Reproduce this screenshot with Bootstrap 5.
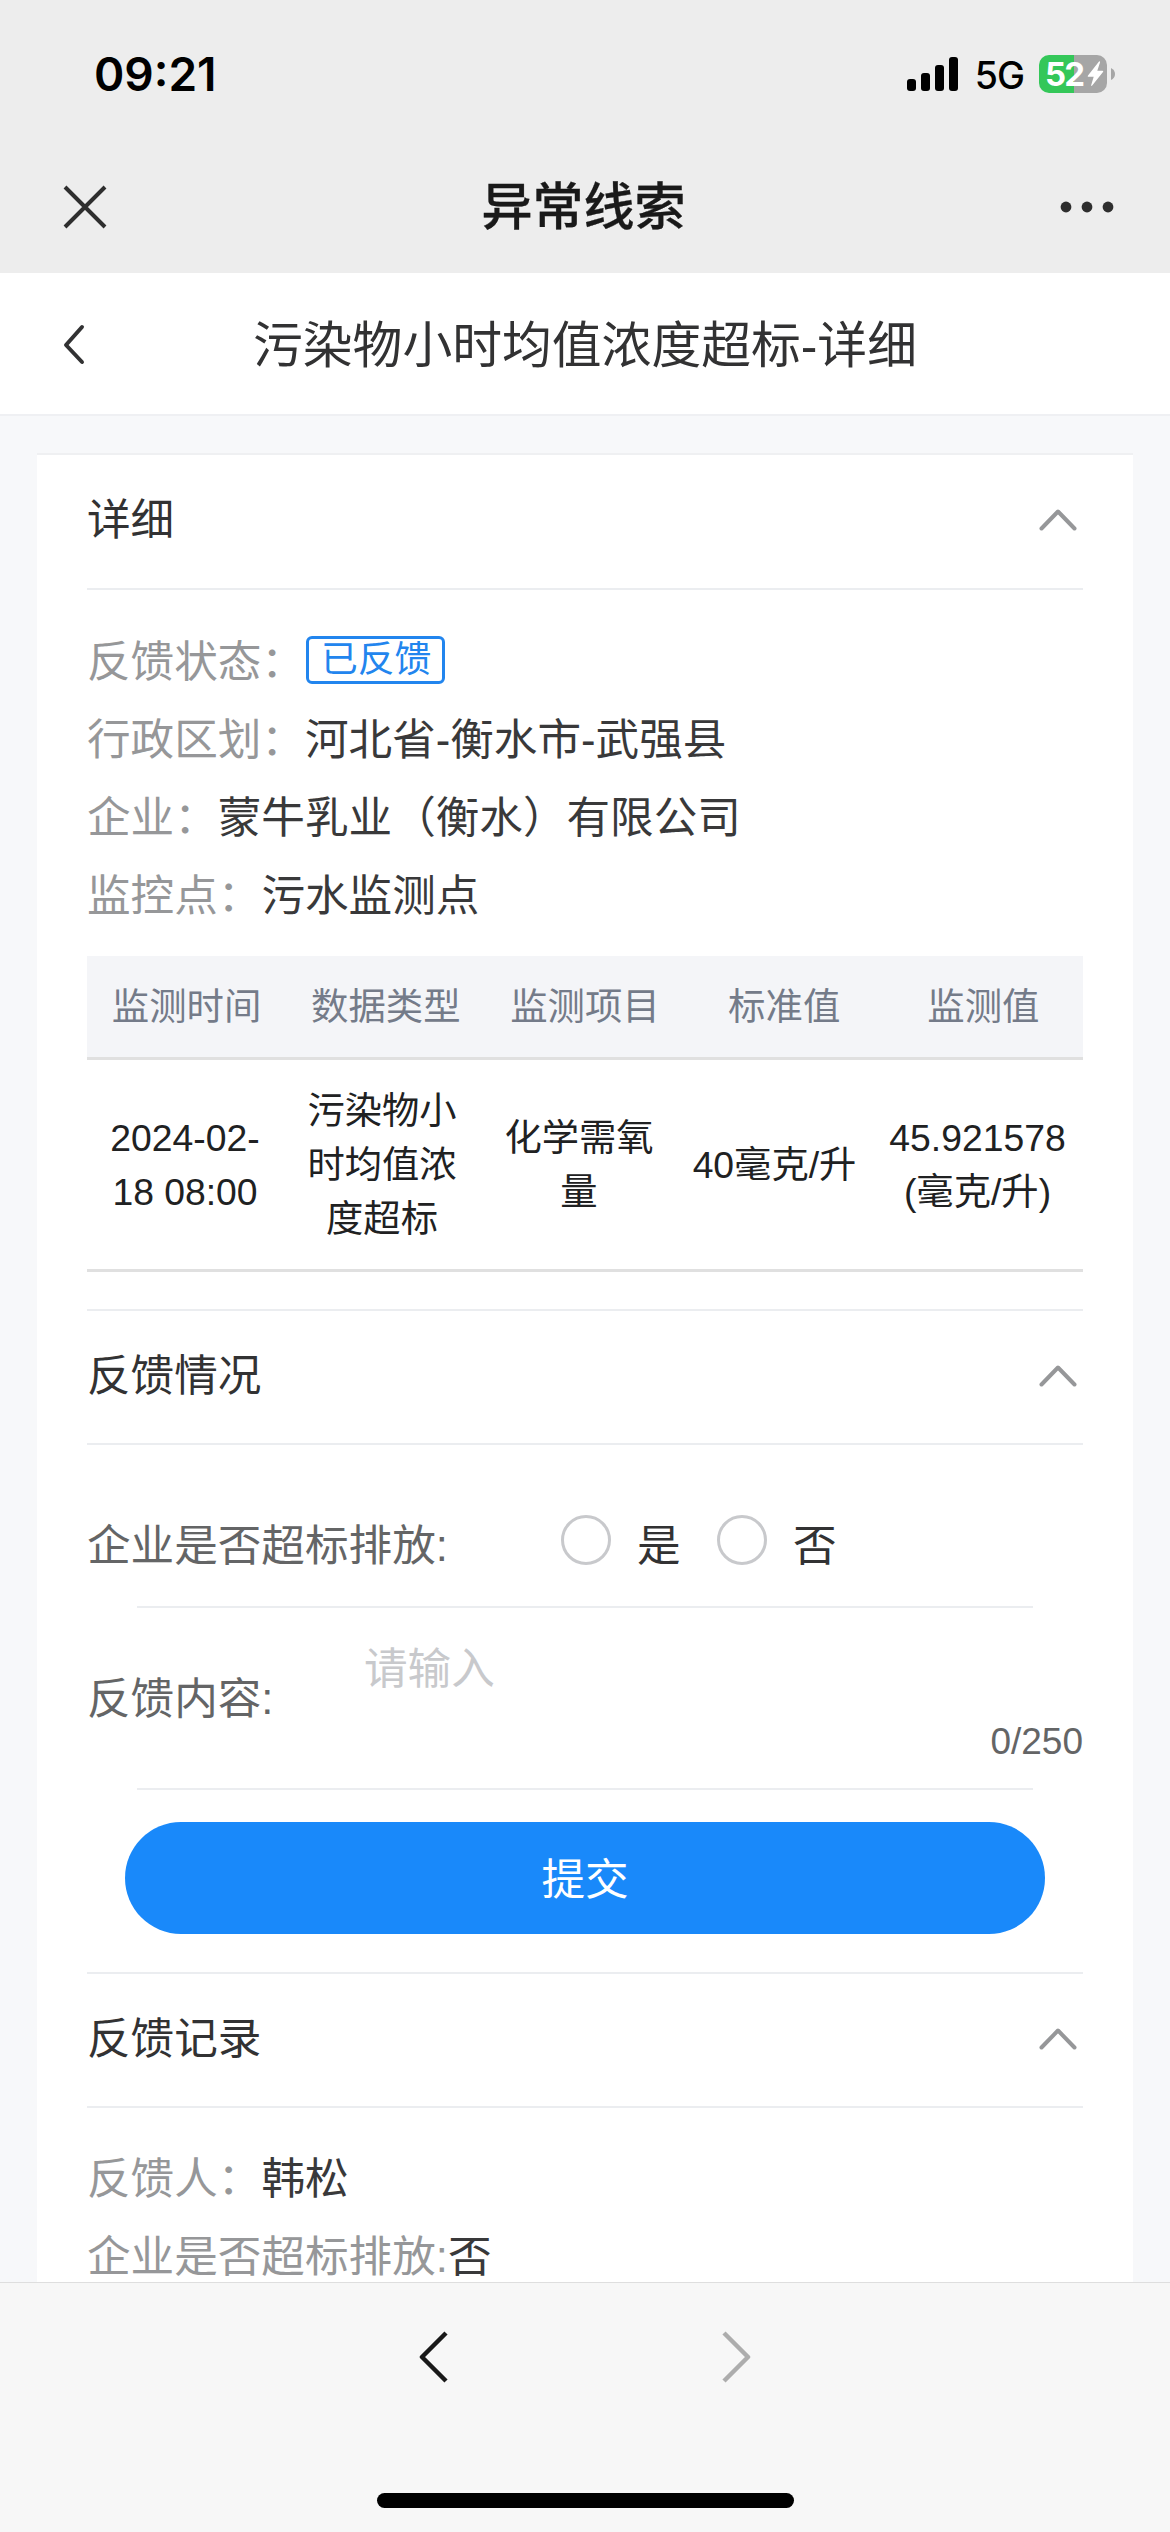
<!DOCTYPE html>
<html lang="zh-CN">
<head>
<meta charset="utf-8">
<meta name="viewport" content="width=device-width, initial-scale=1">
<title>异常线索</title>
<link href="https://cdn.jsdelivr.net/npm/bootstrap@5.3.0/dist/css/bootstrap.min.css" rel="stylesheet">
<style>
  body { font-family: "Liberation Sans", "Noto Sans CJK SC", sans-serif; font-size: 43.6px; line-height: 78px; color: #323233; background: #f7f8fa; height: 2532px; overflow: hidden; }
  svg { display: block; flex: none; }
  .chrome { background: #ededed; height: 273px; }
  .status { height: 148px; padding: 0 54px 0 94px; font-family: Inter, sans-serif; color: #000; }
  .clock { font-size: 46px; font-weight: 600; }
  .network { font-size: 37.5px; font-weight: 500; margin: 4px 15px 0 17px; letter-spacing: -1px; }
  .battery { width: 68px; height: 38px; border-radius: 10px; background: linear-gradient(90deg, #34c759 35px, #a6a6a6 35px); color: #fff; font-size: 33px; font-weight: 700; line-height: 38px; padding-left: 6px; letter-spacing: -1.8px; }
  .app-title { height: 117px; padding: 0 56px 0 63px; font-size: 51px; font-weight: 500; color: #191919; }
  .app-title span { padding-top: 2px; -webkit-text-stroke: .3px #191919; }
  .page-title { height: 143px; padding: 0 63px; font-size: 49.8px; border-bottom: 2px solid #eff0f3; }
  .page-title span { padding-top: 5px; }
  .page-title .side { width: 22px; }
  .sheet { margin: 37px 37px 0; height: 1829px; padding: 0 50px; border-top: 2px solid #eff0f2; overflow: hidden; }
  .section-head { height: 135px; padding: 0 6px 3px 0; border-bottom: 2px solid #ebedf0; }
  .divided .section-head { height: 134px; }
  .divided { border-top: 2px solid #ebedf0; }
  .gap-above { margin-top: 37px; }
  .details { padding-top: 33px; color: #39393a; }
  .divided .details { padding-top: 32px; }
  .last-line { line-height: 48px; margin-top: 15px; }
  .caption { color: #969799; }
  .state { height: 48px; border: 3px solid #2285ee; border-radius: 6px; color: #2285ee; font-size: 36.8px; line-height: 42px; padding: 0 11px 0 12px; margin: 0 0 4px 1px; }
  .grid-head { margin-top: 21px; height: 104px; background: #f4f5f8; color: #747b89; border-bottom: 3px solid #e0e0e0; font-size: 37.4px; }
  .grid-body { height: 212px; border-bottom: 3px solid #e0e0e0; font-size: 37.3px; line-height: 54px; color: #202122; }
  .w-a { width: 196px; } .w-b { width: 198px; } .w-c { width: 196px; } .w-d { width: 195px; } .w-e { width: 211px; }
  .inset { height: 2px; margin: 0 50px; background: #ebedf0; }
  .question { height: 161px; padding-top: 40px; }
  .ask { color: #646566; width: 474px; }
  .choice { gap: 26px; width: 156px; }
  .choice .form-check-input { width: 50px; height: 50px; border: 3px solid #c8c9cc; margin: -12px 0 0; flex: none; }
  .answer { height: 180px; }
  .answer .ask { width: 277px; padding-top: 2px; }
  .answer textarea { height: 78px; padding: 0; font-size: 43.6px; line-height: 78px; resize: none; overflow: hidden; margin-top: 22px; }
  .answer textarea::placeholder { color: #c8c9cc; opacity: 1; }
  .counter { font-size: 37px; line-height: 54px; color: #646566; margin-top: 6px; }
  .submit { width: 920px; height: 112px; margin: 32px auto 38px; background: #1989fa; border: 0; font-size: 43.6px; line-height: 78px; padding-top: 9px; }
  .footer-bar { height: 250px; background: #f7f7f7; border-top: 1px solid #dedede; }
  .history { padding-top: 48px; gap: 274px; }
  .home-bar { width: 417px; height: 15px; border-radius: 8px; background: #000; margin: 110px auto 0; }
</style>
</head>
<body class="d-flex flex-column">
<header class="chrome">
  <div class="status d-flex align-items-center">
    <span class="clock me-auto">09:21</span>
    <svg width="51" height="34" viewBox="0 0 51 34"><rect y="22" width="9" height="12" rx="3"/><rect x="14" y="16" width="9" height="18" rx="3"/><rect x="28" y="8" width="9" height="26" rx="3"/><rect x="42" width="9" height="34" rx="3"/></svg>
    <span class="network">5G</span>
    <div class="battery d-flex align-items-center"><span>52</span>
      <svg class="ms-1" width="17" height="26" viewBox="0 0 17 26"><path fill="#fff" d="M12 .5 1 14.5q-.8 1.2.7 1.2h5L4.2 24q-.2 1.500 1 .5L16 11q.8-1.200-.7-1.200h-5L13 1.500Q13.200-.5 12 .5z"/></svg>
    </div>
    <svg class="ms-1" width="5" height="14" viewBox="0 0 5 14"><path d="M0 1q4 2 4 6t-4 6z" fill="#a6a6a6"/></svg>
  </div>
  <div class="app-title d-flex align-items-center justify-content-between">
    <svg width="44" height="44" viewBox="0 0 44 44" fill="none" stroke="#2e2e2e" stroke-width="4"><path d="m2 2 40 40M42 2 2 42"/></svg>
    <span>异常线索</span>
    <svg width="54" height="12" viewBox="0 0 54 12" fill="#2e2e2e"><circle cx="6" cy="6" r="5.400"/><circle cx="27" cy="6" r="5.400"/><circle cx="48" cy="6" r="5.400"/></svg>
  </div>
</header>
<nav class="page-title bg-white d-flex align-items-center justify-content-between">
  <svg width="22" height="42" viewBox="0 0 22 42" fill="none" stroke="#323233" stroke-width="4" stroke-linecap="round" stroke-linejoin="round"><path d="M19 4 3 22l16 17"/></svg>
  <span>污染物小时均值浓度超标-详细</span>
  <div class="side"></div>
</nav>
<main class="sheet bg-white">
  <section>
    <div class="section-head d-flex align-items-center justify-content-between"><span>详细</span>
      <svg width="38" height="22" viewBox="0 0 38 22" fill="none" stroke="#969799" stroke-width="4" stroke-linecap="round" stroke-linejoin="round"><path d="M2.500 19.500 19 2.500l16.500 17"/></svg></div>
    <div class="details">
      <div class="d-flex align-items-center"><span class="caption">反馈状态：</span><span class="state">已反馈</span></div>
      <div><span class="caption">行政区划：</span>河北省-衡水市-武强县</div>
      <div><span class="caption">企业：</span>蒙牛乳业（衡水）有限公司</div>
      <div><span class="caption">监控点：</span>污水监测点</div>
    </div>
    <div class="grid-head d-flex align-items-center text-center">
      <div class="col">监测时间</div><div class="col">数据类型</div><div class="col">监测项目</div><div class="col">标准值</div><div class="col">监测值</div>
    </div>
    <div class="grid-body d-flex align-items-center text-center">
      <div class="w-a">2024-02-<br>18 08:00</div>
      <div class="w-b">污染物小<br>时均值浓<br>度超标</div>
      <div class="w-c">化学需氧<br>量</div>
      <div class="w-d text-nowrap">40毫克/升</div>
      <div class="w-e">45.921578<br>(毫克/升)</div>
    </div>
  </section>
  <section class="divided gap-above">
    <div class="section-head d-flex align-items-center justify-content-between"><span>反馈情况</span>
      <svg width="38" height="22" viewBox="0 0 38 22" fill="none" stroke="#969799" stroke-width="4" stroke-linecap="round" stroke-linejoin="round"><path d="M2.500 19.500 19 2.500l16.500 17"/></svg></div>
    <div class="question d-flex align-items-center">
      <span class="ask">企业是否超标排放:</span>
      <label class="choice d-flex align-items-center"><input class="form-check-input" type="radio" name="over"><span>是</span></label>
      <label class="choice d-flex align-items-center"><input class="form-check-input" type="radio" name="over"><span>否</span></label>
    </div>
    <div class="inset"></div>
    <div class="answer d-flex align-items-center">
      <span class="ask">反馈内容:</span>
      <div class="flex-grow-1 align-self-start">
        <textarea class="form-control border-0 shadow-none bg-transparent" placeholder="请输入"></textarea>
        <div class="counter text-end">0/250</div>
      </div>
    </div>
    <div class="inset"></div>
    <button class="submit btn btn-primary rounded-pill d-block">提交</button>
  </section>
  <section class="divided">
    <div class="section-head d-flex align-items-center justify-content-between"><span>反馈记录</span>
      <svg width="38" height="22" viewBox="0 0 38 22" fill="none" stroke="#969799" stroke-width="4" stroke-linecap="round" stroke-linejoin="round"><path d="M2.500 19.500 19 2.500l16.500 17"/></svg></div>
    <div class="details">
      <div><span class="caption">反馈人：</span>韩松</div>
      <div class="last-line"><span class="caption">企业是否超标排放:</span>否</div>
    </div>
  </section>
</main>
<footer class="footer-bar">
  <div class="history d-flex justify-content-center">
    <svg width="29" height="52" viewBox="0 0 29 52" fill="none" stroke="#191919" stroke-width="4.500" stroke-linejoin="round"><path d="M27 2 3 26l24 24"/></svg>
    <svg width="29" height="52" viewBox="0 0 29 52" fill="none" stroke="#adadad" stroke-width="4.500" stroke-linejoin="round"><path d="m2 2 24 24L2 50"/></svg>
  </div>
  <div class="home-bar"></div>
</footer>
<script src="https://cdn.jsdelivr.net/npm/bootstrap@5.3.0/dist/js/bootstrap.bundle.min.js"></script>
</body>
</html>
